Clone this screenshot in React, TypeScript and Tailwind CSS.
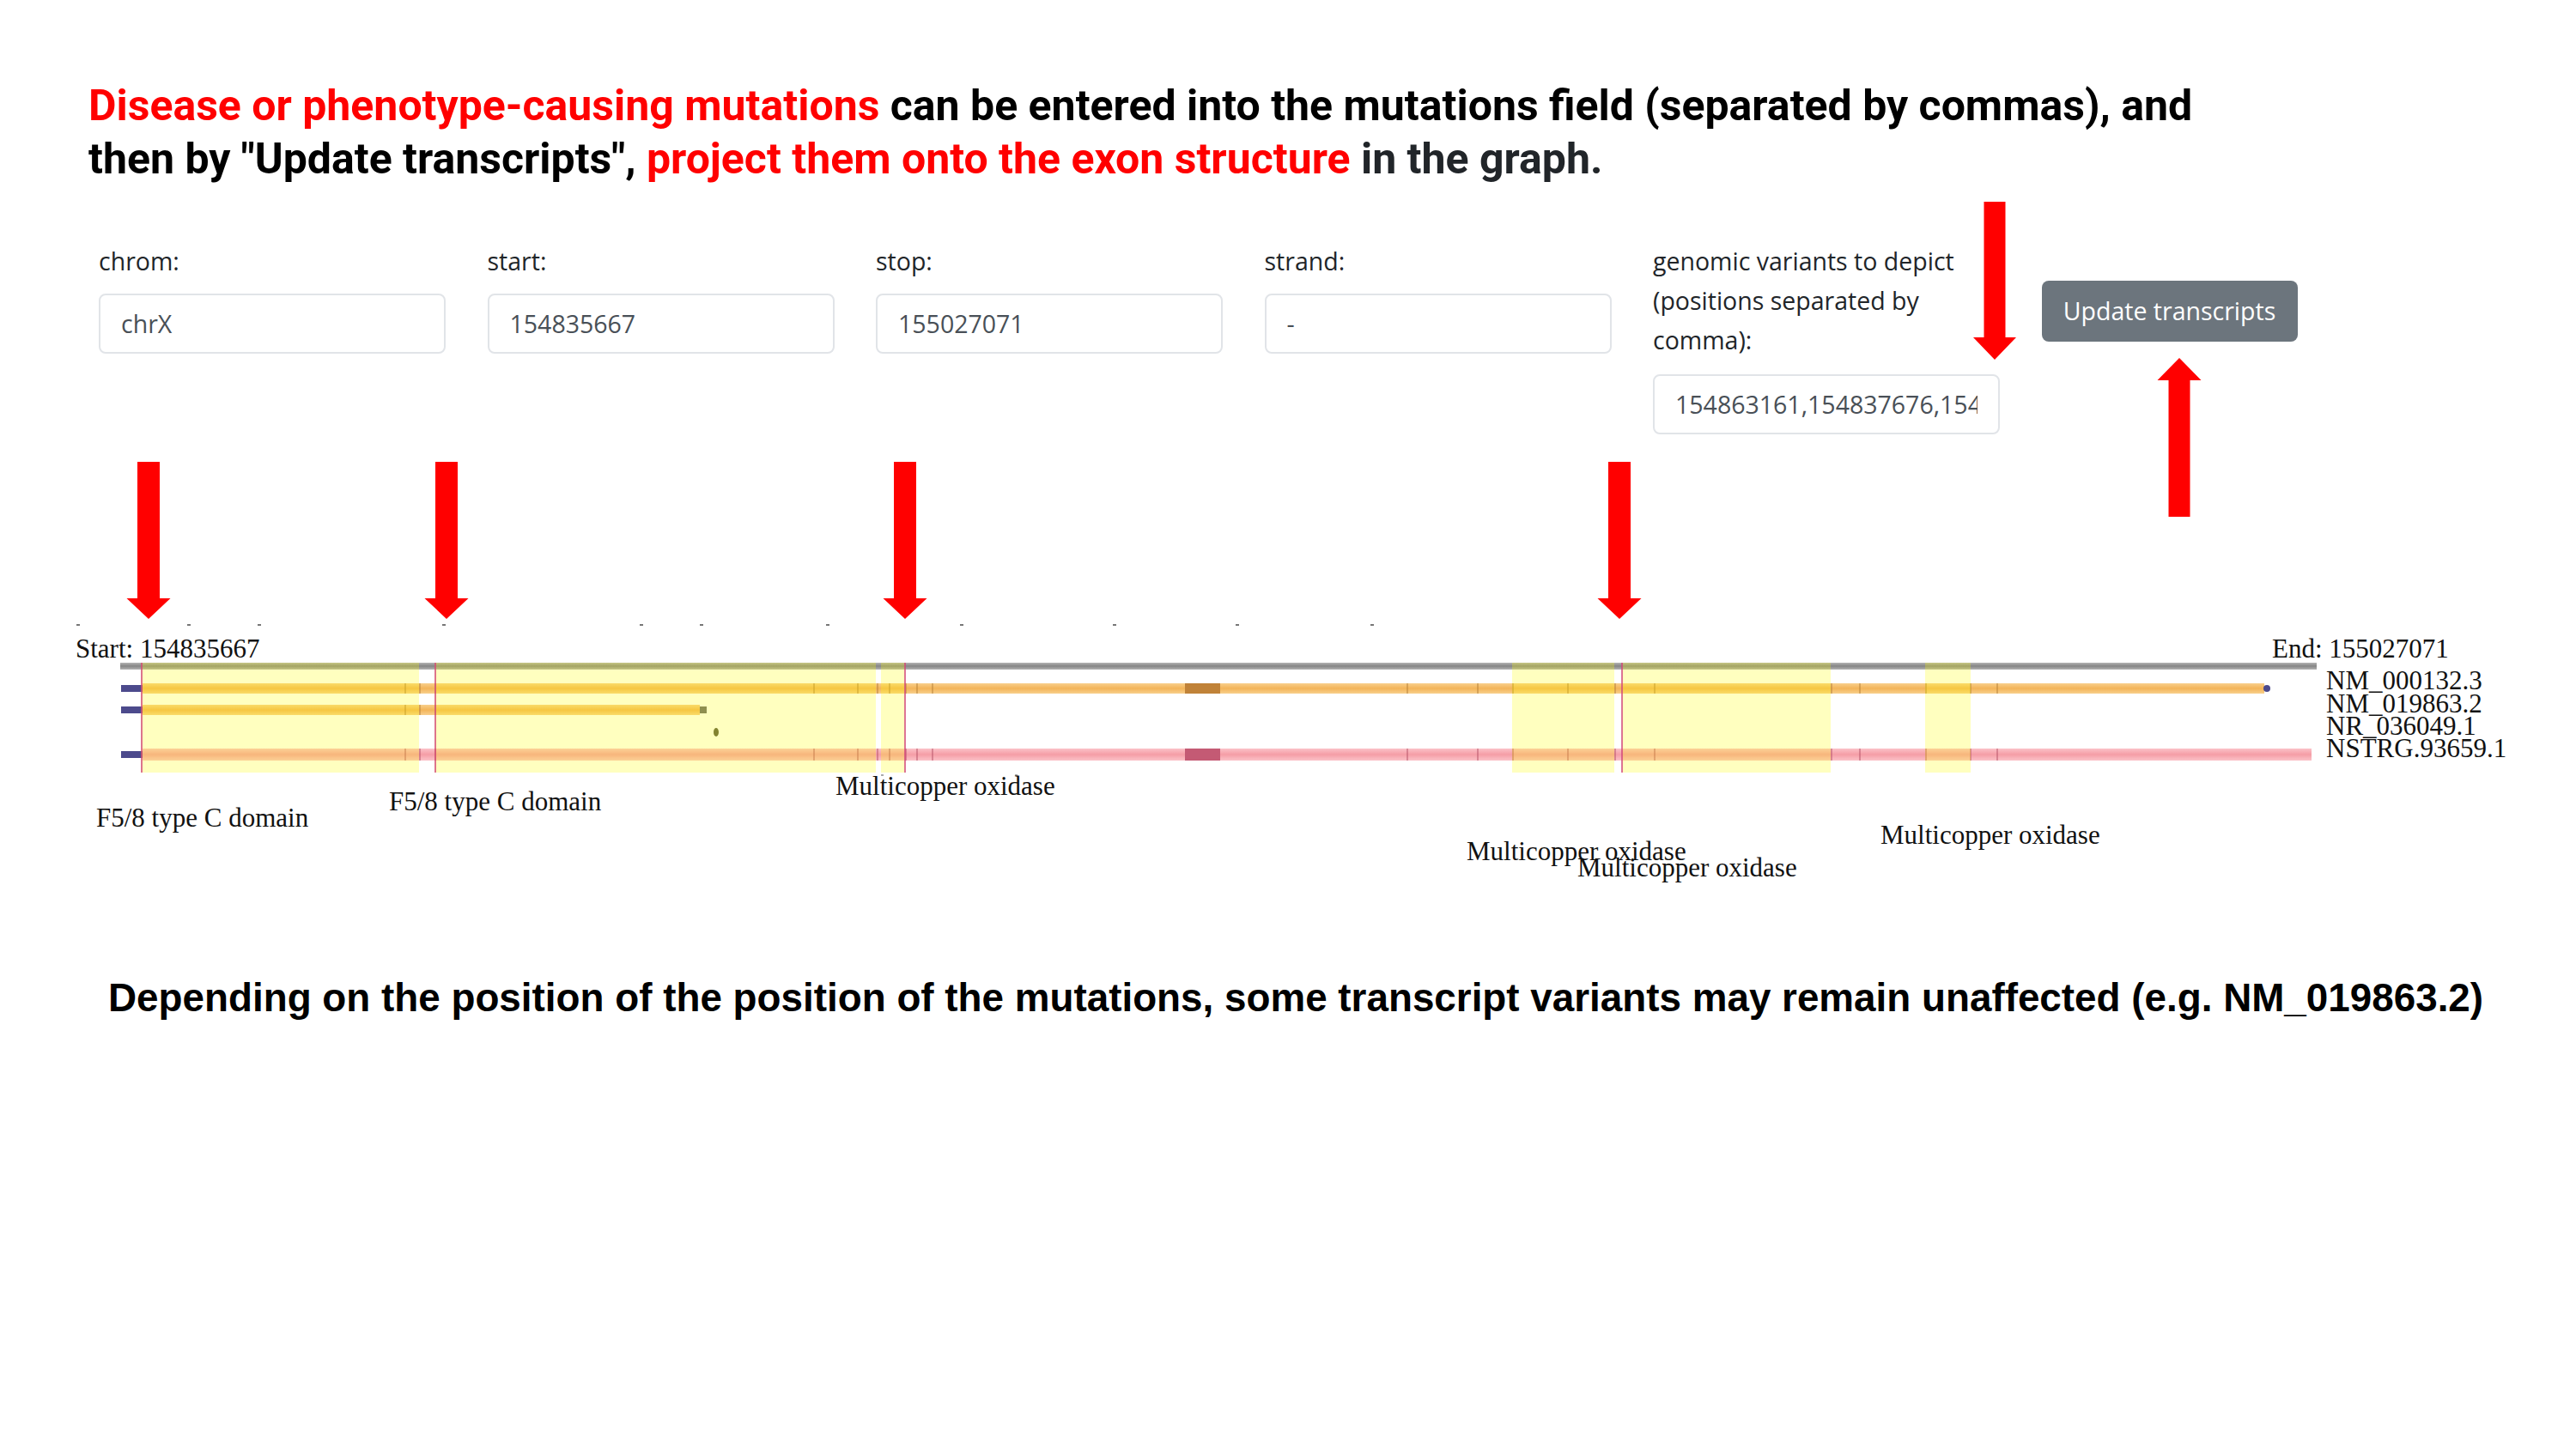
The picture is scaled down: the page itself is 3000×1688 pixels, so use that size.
import React from "react";

const red = "#ff0000";

type ArrowProps = { cx: number; top: number; base: number; tip: number; shaft?: number; head?: number };

// down arrow when tip > top, up arrow otherwise
const arrowPoints = ({ cx, top, base, tip, shaft = 26, head = 51 }: ArrowProps) => {
  const s = shaft / 2;
  const h = head / 2;
  return [
    [cx - s, top],
    [cx + s, top],
    [cx + s, base],
    [cx + h, base],
    [cx, tip],
    [cx - h, base],
    [cx - s, base],
  ]
    .map((p) => p.join(","))
    .join(" ");
};

const highlights: [number, number][] = [
  [164, 488],
  [506, 1020],
  [1026, 1054],
  [1761, 1880],
  [1889, 2132],
  [2242, 2295],
];

const mutations = [164, 506, 1053, 1888];
const arrowXs = [173, 520, 1054, 1886];

const exonLines = [471, 488, 506, 947, 998, 1021, 1035, 1054, 1067, 1085, 1638, 1720, 1761, 1825, 1880, 1926, 2132, 2165, 2242, 2294, 2325];

const ticks = [89, 218, 300, 515, 745, 815, 962, 1118, 1296, 1439, 1596];

const domains = [
  { x: 112, y: 963, label: "F5/8 type C domain" },
  { x: 453, y: 944, label: "F5/8 type C domain" },
  { x: 973, y: 926, label: "Multicopper oxidase" },
  { x: 1708, y: 1002, label: "Multicopper oxidase" },
  { x: 1837, y: 1021, label: "Multicopper oxidase" },
  { x: 2190, y: 983, label: "Multicopper oxidase" },
];

const transcripts = [
  { y: 803, label: "NM_000132.3" },
  { y: 830, label: "NM_019863.2" },
  { y: 856, label: "NR_036049.1" },
  { y: 882, label: "NSTRG.93659.1" },
];

const TranscriptGraph = () => {
  const serif = '"Liberation Serif", "Times New Roman", serif';
  const fs = 31;
  return (
    <svg width={3000} height={520} viewBox="0 520 3000 520" className="block">
      <defs>
        <linearGradient id="orange" x1="0" y1="0" x2="0" y2="1">
          <stop offset="0" stopColor="#f8cf8c" />
          <stop offset="0.5" stopColor="#f3b458" />
          <stop offset="1" stopColor="#f8cf8c" />
        </linearGradient>
        <linearGradient id="pink" x1="0" y1="0" x2="0" y2="1">
          <stop offset="0" stopColor="#fbc2c8" />
          <stop offset="0.5" stopColor="#f59da6" />
          <stop offset="1" stopColor="#fbc2c8" />
        </linearGradient>
        <linearGradient id="gray" x1="0" y1="0" x2="0" y2="1">
          <stop offset="0" stopColor="#b4b4b4" />
          <stop offset="0.5" stopColor="#858585" />
          <stop offset="1" stopColor="#b4b4b4" />
        </linearGradient>
      </defs>

      {arrowXs.map((cx) => (
        <polygon key={cx} points={arrowPoints({ cx, top: 538, base: 697, tip: 721 })} fill={red} />
      ))}

      {ticks.map((x) => (
        <rect key={x} x={x} y={727} width={4} height={2} fill="#777" />
      ))}
      <rect x={1026} y={902} width={3} height={2} fill="#aaa" />
      <rect x={1182} y={902} width={3} height={2} fill="#aaa" />

      <text x={88} y={766} fontFamily={serif} fontSize={fs} fill="#111">
        Start: 154835667
      </text>
      <text x={2646} y={766} fontFamily={serif} fontSize={fs} fill="#111">
        End: 155027071
      </text>

      <rect x={140} y={772} width={2558} height={8} fill="url(#gray)" />

      {/* NM_000132.3 */}
      <rect x={141} y={798} width={26} height={8} fill="#4c4a8c" />
      <rect x={166} y={796} width={2471} height={12} fill="url(#orange)" />
      <rect x={1380} y={796} width={41} height={12} fill="#c08238" />
      <ellipse cx={2640} cy={802} rx={4} ry={4} fill="#4c4a8c" />

      {/* NM_019863.2 */}
      <rect x={141} y={823} width={26} height={8} fill="#4c4a8c" />
      <rect x={166} y={821} width={649} height={12} fill="url(#orange)" />
      <rect x={815} y={823} width={8} height={8} fill="#6a6a6a" />

      {/* NR_036049.1 */}
      <ellipse cx={834} cy={853} rx={3} ry={5} fill="#5a5a40" />

      {/* NSTRG.93659.1 */}
      <rect x={141} y={875} width={26} height={8} fill="#4c4a8c" />
      <rect x={166} y={872} width={2526} height={14} fill="url(#pink)" />
      <rect x={1380} y={872} width={41} height={14} fill="#c45a74" />

      {exonLines.map((x) => (
        <g key={x}>
          <rect x={x} y={796} width={2} height={12} fill="#b07a30" opacity={0.45} />
          <rect x={x} y={872} width={2} height={14} fill="#b04a60" opacity={0.45} />
          {x < 815 && <rect x={x} y={821} width={2} height={12} fill="#b07a30" opacity={0.45} />}
        </g>
      ))}

      {highlights.map(([a, b]) => (
        <rect key={a} x={a} y={772} width={b - a} height={128} fill="#ffff00" opacity={0.25} />
      ))}

      {mutations.map((x) => (
        <rect key={x} x={x} y={772} width={2} height={128} fill="#d2467a" opacity={0.75} />
      ))}

      {transcripts.map((t) => (
        <text key={t.label} x={2709} y={t.y} fontFamily={serif} fontSize={fs} fill="#111">
          {t.label}
        </text>
      ))}

      {domains.map((d) => (
        <text key={d.x} x={d.x} y={d.y} fontFamily={serif} fontSize={fs} fill="#111">
          {d.label}
        </text>
      ))}
    </svg>
  );
};

const fields = [
  { label: "chrom:", value: "chrX" },
  { label: "start:", value: "154835667" },
  { label: "stop:", value: "155027071" },
  { label: "strand:", value: "-" },
];

const inputCls =
  "block h-[70px] w-full rounded-[8px] border-2 border-[#e1e4e8] bg-white px-[24px] text-[28.5px] text-[#495057] outline-none";

export default function App() {
  return (
    <div className="relative h-[1688px] w-[3000px] overflow-hidden bg-white">
      <h1 className="pl-[103px] pt-[92px] font-['Roboto',sans-serif] text-[50px] font-bold leading-[62px] text-black">
        <span className="text-[#ff0000]">Disease or phenotype-causing mutations</span> can be entered into the mutations
        field (separated by commas), and
        <br />
        then by "Update transcripts", <span className="text-[#ff0000]">project them onto the exon structure</span>{" "}
        <span className="text-[#212529]">in the graph.</span>
      </h1>

      <div className="mt-[65px] flex items-start gap-[48.5px] pl-[115px] font-['Open_Sans',sans-serif]">
        {fields.map((f) => (
          <div key={f.label} className="w-[404px]">
            <label className="mb-[15px] block text-[28.5px] leading-[46px] text-[#212529]">{f.label}</label>
            <input readOnly value={f.value} className={inputCls} />
          </div>
        ))}
        <div className="w-[404px]">
          <label className="mb-[17px] block text-[28.5px] leading-[46px] text-[#212529]">
            genomic variants to depict (positions separated by comma):
          </label>
          <input readOnly value="154863161,154837676,154865032,154923560" className={inputCls} />
        </div>
        <button className="mt-[46px] h-[71px] w-[298px] rounded-[8px] bg-[#6c757d] text-[28.5px] text-white">
          Update transcripts
        </button>
      </div>

      <div className="mt-[14px]">
        <TranscriptGraph />
      </div>

      <p className="mt-[95px] pl-[126px] font-['Liberation_Sans',Arial,sans-serif] text-[45.8px] font-bold leading-[56px] text-black">
        Depending on the position of the position of the mutations, some transcript variants may remain unaffected
        (e.g. NM_019863.2)
      </p>

      {/* annotation arrows pointing at the variants field and the button */}
      <svg className="absolute left-[2280px] top-[230px]" width={300} height={380} viewBox="2280 230 300 380">
        <polygon points={arrowPoints({ cx: 2323, top: 235, base: 393, tip: 419, shaft: 25, head: 50 })} fill={red} />
        <polygon points={arrowPoints({ cx: 2538, top: 602, base: 443, tip: 417, shaft: 25, head: 51 })} fill={red} />
      </svg>
    </div>
  );
}
